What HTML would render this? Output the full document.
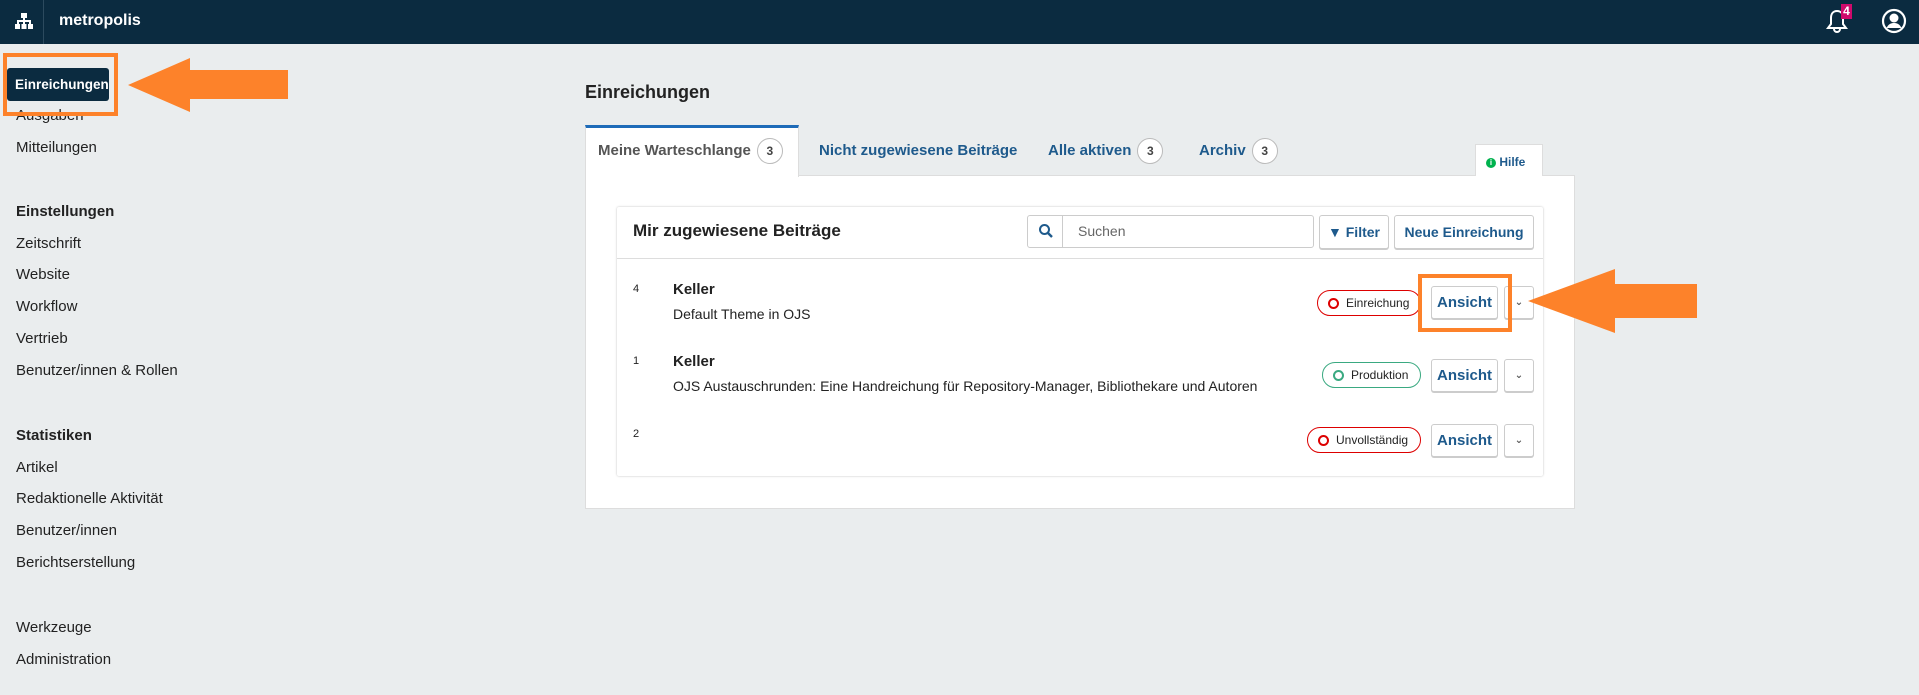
<!DOCTYPE html>
<html><head><meta charset="utf-8"><style>
*{box-sizing:border-box;margin:0;padding:0}
body{width:1919px;height:695px;overflow:hidden;background:#eaedee;font-family:"Liberation Sans","DejaVu Sans",sans-serif;color:#222;position:relative;font-size:15px}
.hdr{position:absolute;left:0;top:0;width:1919px;height:44px;background:#0b2b40}
.abs{position:absolute;white-space:nowrap}
.side{font-size:15px;color:#222}
.b{font-weight:bold}
.blue{color:#1e5a8c}
.badge{display:inline-block;width:26px;height:26px;border:1px solid #bbb;border-radius:50%;text-align:center;line-height:24px;font-size:12px;color:#444;background:#fff;vertical-align:middle;margin-left:6px}
.btn{position:absolute;background:#fff;border:1px solid #ccc;border-radius:3px;box-shadow:0 1px 0 #ccc;font-weight:bold;color:#1e5a8c;text-align:center;font-size:15px}
.pill{position:absolute;height:26px;border-radius:13px;font-size:12px;line-height:24px;padding-left:28px;background:#fff}
.pill:before{content:"";position:absolute;left:10px;top:7px;width:7px;height:7px;border-radius:50%;border:2px solid currentColor}
</style></head><body>
<div class="hdr"></div>
<svg class="abs" style="left:15px;top:13px" width="18" height="16" viewBox="0 0 18 16"><rect x="6" y="0" width="6" height="5" fill="#fff"/><rect x="8" y="5" width="2" height="3" fill="#fff"/><rect x="2" y="7" width="14" height="2" fill="#fff"/><rect x="2" y="8" width="2" height="3" fill="#fff"/><rect x="8" y="8" width="2" height="3" fill="#fff"/><rect x="14" y="8" width="2" height="3" fill="#fff"/><rect x="0" y="11" width="5" height="5" fill="#fff"/><rect x="6.5" y="11" width="5" height="5" fill="#fff"/><rect x="13" y="11" width="5" height="5" fill="#fff"/></svg>
<div class="abs" style="left:43px;top:0;width:1px;height:44px;background:#2c4a5e"></div>
<div class="abs b" style="left:59px;top:12px;color:#fff;font-size:16px">metropolis</div>
<svg class="abs" style="left:1825px;top:8px" width="24" height="26" viewBox="0 0 24 26"><path d="M12 3c-4 0-6 3-6 7v6l-3 4h18l-3-4v-6c0-4-2-7-6-7zM9 21a3 3 0 0 0 6 0" fill="none" stroke="#fff" stroke-width="2"/></svg>
<div class="abs" style="left:1841px;top:4px;width:11px;height:15px;background:#d00a6c;color:#fff;font-size:12px;font-weight:bold;text-align:center;line-height:15px">4</div>
<svg class="abs" style="left:1881px;top:8px" width="26" height="26" viewBox="0 0 26 26"><circle cx="13" cy="13" r="11" fill="none" stroke="#fff" stroke-width="2.2"/><circle cx="13" cy="10" r="4.5" fill="#fff"/><path d="M5.5 20c2-4 4.5-5 7.5-5s5.5 1 7.5 5" fill="#fff"/></svg>

<div class="abs side" style="left:16px;top:107px">Ausgaben</div>
<div class="abs" style="left:7px;top:68px;width:102px;height:33px;background:#0b2b40;border-radius:3px;color:#fff;font-weight:bold;font-size:13.5px;padding:9px 0 0 8px">Einreichungen</div>
<div class="abs" style="left:3px;top:53px;width:115px;height:63px;border:4px solid #fd822a"></div>
<svg class="abs" style="left:125px;top:56px" width="165" height="58"><path d="M3 29 L65 2 L65 14 L163 14 L163 43 L65 43 L65 56 Z" fill="#fd822a"/></svg>
<div class="abs side" style="left:16px;top:139px">Mitteilungen</div>
<div class="abs side b" style="left:16px;top:203px">Einstellungen</div>
<div class="abs side" style="left:16px;top:235px">Zeitschrift</div>
<div class="abs side" style="left:16px;top:266px">Website</div>
<div class="abs side" style="left:16px;top:298px">Workflow</div>
<div class="abs side" style="left:16px;top:330px">Vertrieb</div>
<div class="abs side" style="left:16px;top:362px">Benutzer/innen &amp; Rollen</div>
<div class="abs side b" style="left:16px;top:427px">Statistiken</div>
<div class="abs side" style="left:16px;top:459px">Artikel</div>
<div class="abs side" style="left:16px;top:490px">Redaktionelle Aktivität</div>
<div class="abs side" style="left:16px;top:522px">Benutzer/innen</div>
<div class="abs side" style="left:16px;top:554px">Berichtserstellung</div>
<div class="abs side" style="left:16px;top:619px">Werkzeuge</div>
<div class="abs side" style="left:16px;top:651px">Administration</div>

<div class="abs" style="left:585px;top:82px;font-size:18px;font-weight:bold;color:#222">Einreichungen</div>
<div class="abs" style="left:585px;top:175px;width:990px;height:334px;background:#fff;border:1px solid #ddd"></div>
<div class="abs" style="left:585px;top:125px;width:214px;height:52px;background:#fff;border-top:3px solid #1e6bb8;border-left:1px solid #ddd;border-right:1px solid #ddd"></div>
<div class="abs" style="left:598px;top:138px;font-size:15px;color:#555;font-weight:bold">Meine Warteschlange<span class="badge">3</span></div>
<div class="abs b blue" style="left:819px;top:142px">Nicht zugewiesene Beiträge</div>
<div class="abs b blue" style="left:1048px;top:138px">Alle aktiven<span class="badge">3</span></div>
<div class="abs b blue" style="left:1199px;top:138px">Archiv<span class="badge">3</span></div>
<div class="abs" style="left:1475px;top:144px;width:68px;height:32px;background:#fff;border:1px solid #ddd;border-bottom:none"></div>
<div class="abs" style="left:1486px;top:155px;font-size:12px;font-weight:bold;color:#1e5a8c"><span style="display:inline-block;width:10px;height:10px;border-radius:50%;background:#00b24e;color:#fff;font-size:8px;text-align:center;line-height:10px;vertical-align:middle">i</span> Hilfe</div>

<div class="abs" style="left:617px;top:207px;width:926px;height:269px;background:#fff;box-shadow:0 0 2px rgba(0,0,0,.25);border-radius:2px"></div>
<div class="abs" style="left:617px;top:258px;width:926px;height:1px;background:#ddd"></div>
<div class="abs b" style="left:633px;top:221px;font-size:17px">Mir zugewiesene Beiträge</div>
<div class="abs" style="left:1027px;top:215px;width:287px;height:33px;border:1px solid #ccc;border-radius:3px;background:#fff"></div>
<div class="abs" style="left:1062px;top:215px;width:1px;height:33px;background:#ccc"></div>
<svg class="abs" style="left:1038px;top:223px" width="16" height="16"><circle cx="6.5" cy="6.5" r="4.5" fill="none" stroke="#1e5a8c" stroke-width="2"/><path d="M10 10l4 4" stroke="#1e5a8c" stroke-width="2.4"/></svg>
<div class="abs" style="left:1078px;top:223px;color:#666;font-size:14px">Suchen</div>
<div class="btn" style="left:1319px;top:215px;width:70px;height:34px;line-height:32px;font-size:14px">▼ Filter</div>
<div class="btn" style="left:1394px;top:215px;width:140px;height:34px;line-height:32px;font-size:14px">Neue Einreichung</div>

<div class="abs" style="left:633px;top:283px;font-size:11px">4</div>
<div class="abs b" style="left:673px;top:281px">Keller</div>
<div class="abs" style="left:673px;top:306px;font-size:14px">Default Theme in OJS</div>
<div class="pill" style="left:1317px;top:290px;width:104px;border:1px solid #d00;color:#d00"><span style="color:#222">Einreichung</span></div>
<div class="btn" style="left:1431px;top:286px;width:67px;height:33px;line-height:31px">Ansicht</div>
<div class="btn" style="left:1504px;top:286px;width:30px;height:33px;line-height:31px;font-size:10px;color:#555">⌄</div>
<div class="abs" style="left:1418px;top:274px;width:94px;height:58px;border:4px solid #fd822a"></div>
<svg class="abs" style="left:1526px;top:268px" width="174" height="66"><path d="M2 33 L89 1 L89 16 L171 16 L171 50 L89 50 L89 65 Z" fill="#fd822a"/></svg>

<div class="abs" style="left:633px;top:355px;font-size:11px">1</div>
<div class="abs b" style="left:673px;top:353px">Keller</div>
<div class="abs" style="left:673px;top:378px;font-size:14px">OJS Austauschrunden: Eine Handreichung für Repository-Manager, Bibliothekare und Autoren</div>
<div class="pill" style="left:1322px;top:362px;width:99px;border:1px solid #3aa981;color:#3aa981"><span style="color:#222">Produktion</span></div>
<div class="btn" style="left:1431px;top:359px;width:67px;height:33px;line-height:31px">Ansicht</div>
<div class="btn" style="left:1504px;top:359px;width:30px;height:33px;line-height:31px;font-size:10px;color:#555">⌄</div>

<div class="abs" style="left:633px;top:428px;font-size:11px">2</div>
<div class="pill" style="left:1307px;top:427px;width:114px;border:1px solid #d00;color:#d00"><span style="color:#222">Unvollständig</span></div>
<div class="btn" style="left:1431px;top:424px;width:67px;height:33px;line-height:31px">Ansicht</div>
<div class="btn" style="left:1504px;top:424px;width:30px;height:33px;line-height:31px;font-size:10px;color:#555">⌄</div>
</body></html>
